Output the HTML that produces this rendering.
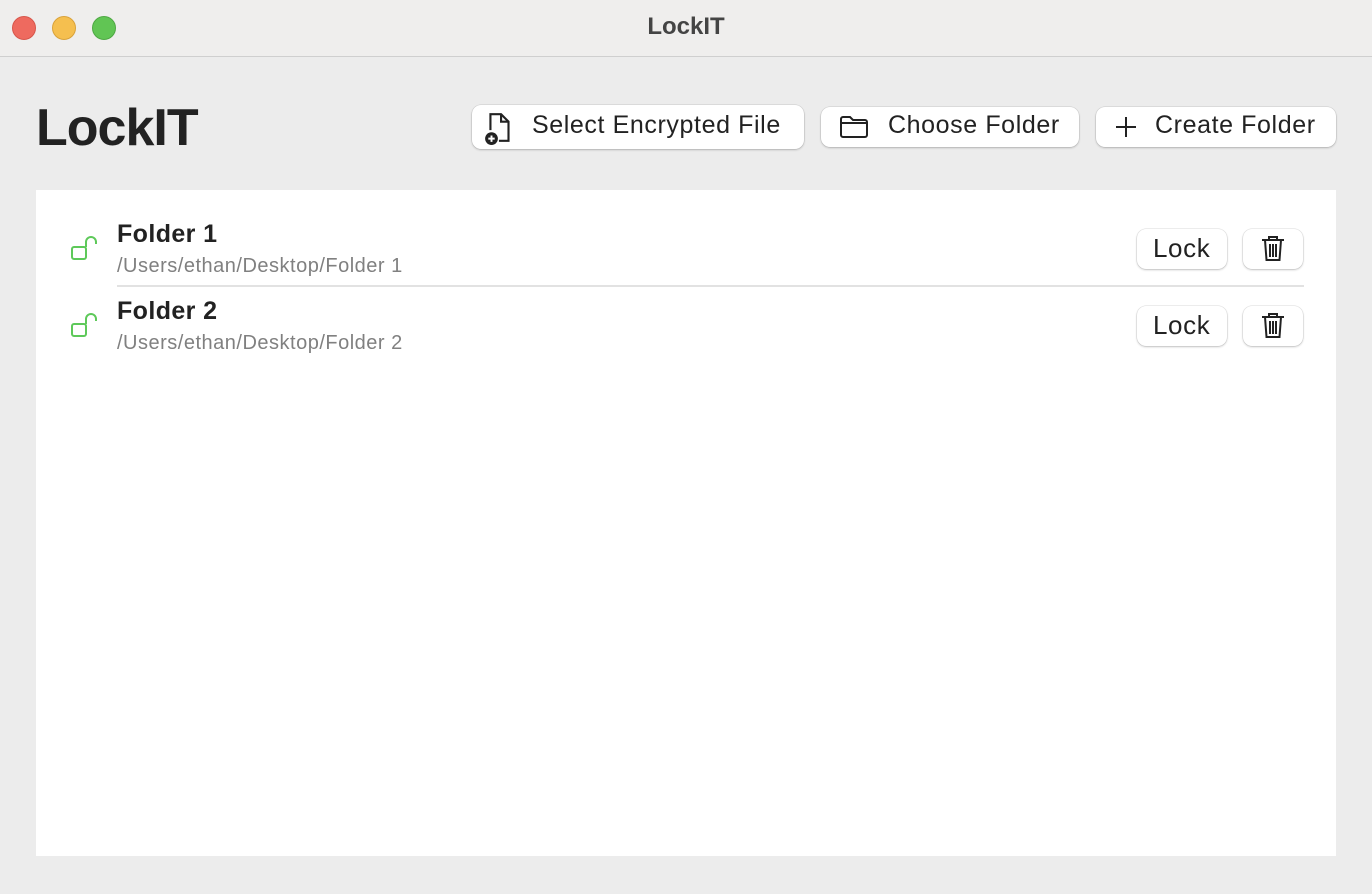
<!DOCTYPE html>
<html><head><meta charset="utf-8"><style>
*{margin:0;padding:0;box-sizing:border-box}
body{width:1372px;height:894px;background:#ececec;font-family:"Liberation Sans",sans-serif;position:relative;overflow:hidden;color:#222}
.tb{position:absolute;left:0;top:0;width:1372px;height:57px;background:#efeeed;border-bottom:1px solid #cfcfcf}
.dot{position:absolute;top:16px;width:24px;height:24px;border-radius:50%}
.ttl{position:absolute;top:13px;width:100%;text-align:center;font-size:24px;font-weight:bold;color:#444}
h1{position:absolute;left:36px;top:98px;font-size:52px;font-weight:bold;color:#222;letter-spacing:-1px}
.btn{position:absolute;background:#fff;border-radius:9px;box-shadow:0 0 0 0.5px rgba(0,0,0,.12),0 1px 2px rgba(0,0,0,.2);font-size:25px;letter-spacing:0.6px;color:#222;display:flex;align-items:center;white-space:nowrap}
.btn svg{position:absolute}
.panel{position:absolute;left:36px;top:190px;width:1300px;height:666px;background:#fff}
.name{position:absolute;left:117px;font-size:25px;font-weight:bold;color:#222;letter-spacing:0.4px}
.path{position:absolute;left:117px;font-size:20px;color:#808080;letter-spacing:0.5px}
.sep{position:absolute;left:117px;top:285px;width:1187px;height:2px;background:#e2e2e2}
</style></head><body>
<div class="tb">
<div class="dot" style="left:12px;background:#ee6a5f;border:1px solid #d7564b"></div>
<div class="dot" style="left:52px;background:#f5bf4f;border:1px solid #d9a23a"></div>
<div class="dot" style="left:92px;background:#61c554;border:1px solid #4ea843"></div>
<div class="ttl">LockIT</div>
</div>
<h1>LockIT</h1>
<div class="btn" style="left:472px;top:105px;width:332px;height:44px">
<svg style="left:12px;top:6px" width="32" height="34" viewBox="0 0 30 32" fill="none" stroke="#222" stroke-width="2"><path d="M6 18V3h10l7 7v18H14"/><path d="M16 3v7h7"/><circle cx="7" cy="26" r="6" fill="#222" stroke="none"/><path d="M7 23v6M4 26h6" stroke="#fff" stroke-width="1.8"/></svg>
<span style="position:absolute;left:60px;top:6px">Select Encrypted File</span></div>
<div class="btn" style="left:821px;top:107px;width:258px;height:40px">
<svg style="left:18px;top:8px" width="30" height="24" viewBox="0 0 30 24" fill="none" stroke="#222" stroke-width="2"><path d="M2 4a2 2 0 0 1 2-2h7l3 3h12a2 2 0 0 1 2 2v13a2 2 0 0 1-2 2H4a2 2 0 0 1-2-2z"/><path d="M2 8h26"/></svg>
<span style="position:absolute;left:67px;top:4px">Choose Folder</span></div>
<div class="btn" style="left:1096px;top:107px;width:240px;height:40px">
<svg style="left:18px;top:8px" width="24" height="24" viewBox="0 0 24 24" fill="none" stroke="#222" stroke-width="2"><path d="M12 2v20M2 12h20"/></svg>
<span style="position:absolute;left:59px;top:4px">Create Folder</span></div>
<div class="panel"></div>
<svg style="position:absolute;left:70px;top:235px" width="30" height="28" viewBox="0 0 30 28" fill="none" stroke="#5ec95a" stroke-width="2"><rect x="2" y="12" width="14" height="12" rx="2"/><path d="M16 12V7a5 5 0 0 1 10 0v2"/></svg>
<svg style="position:absolute;left:70px;top:312px" width="30" height="28" viewBox="0 0 30 28" fill="none" stroke="#5ec95a" stroke-width="2"><rect x="2" y="12" width="14" height="12" rx="2"/><path d="M16 12V7a5 5 0 0 1 10 0v2"/></svg>
<div class="name" style="top:220px">Folder 1</div>
<div class="path" style="top:255px">/Users/ethan/Desktop/Folder 1</div>
<div class="sep"></div>
<div class="name" style="top:297px">Folder 2</div>
<div class="path" style="top:332px">/Users/ethan/Desktop/Folder 2</div>
<div class="btn" style="left:1137px;top:229px;width:90px;height:40px;font-size:26px"><span style="position:absolute;left:16px;top:4px">Lock</span></div>
<div class="btn" style="left:1243px;top:229px;width:60px;height:40px">
<svg style="left:17px;top:6px" width="26" height="28" viewBox="0 0 26 28" fill="none" stroke="#222" stroke-width="2"><path d="M2 5h22M9 5V2h8v3M5 5l1.5 20h13L21 5M10 9v13M13 9v13M16 9v13"/></svg></div>
<div class="btn" style="left:1137px;top:306px;width:90px;height:40px;font-size:26px"><span style="position:absolute;left:16px;top:4px">Lock</span></div>
<div class="btn" style="left:1243px;top:306px;width:60px;height:40px">
<svg style="left:17px;top:6px" width="26" height="28" viewBox="0 0 26 28" fill="none" stroke="#222" stroke-width="2"><path d="M2 5h22M9 5V2h8v3M5 5l1.5 20h13L21 5M10 9v13M13 9v13M16 9v13"/></svg></div>
</body></html>
